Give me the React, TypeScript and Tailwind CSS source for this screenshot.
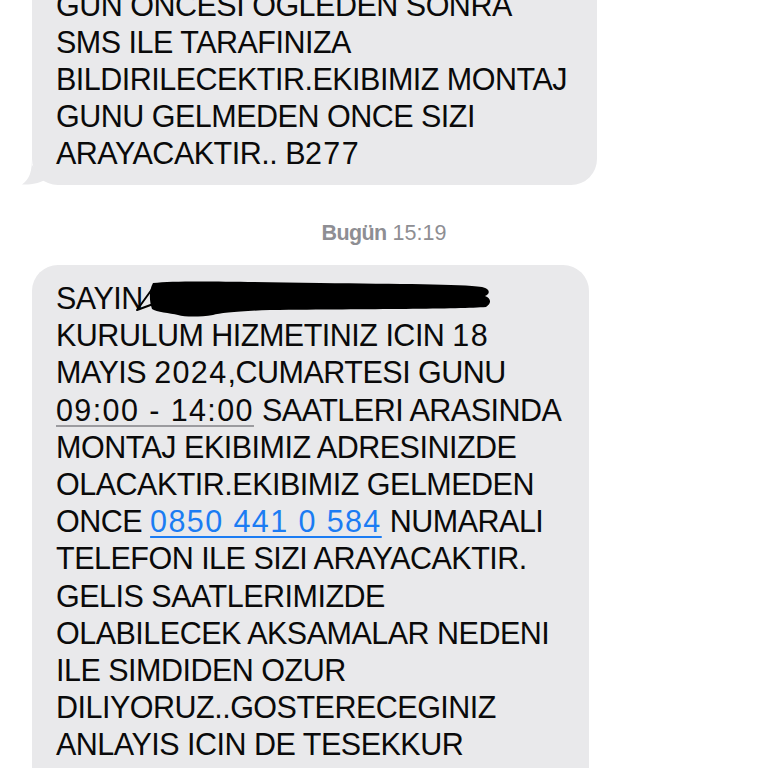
import React from "react";

const Line = ({ children }: { children: React.ReactNode }) => (
  <div className="whitespace-nowrap">{children}</div>
);

const D = ({ children }: { children: React.ReactNode }) => (
  <span className="tracking-[1.4px]">{children}</span>
);

export default function App() {
  return (
    <div className="h-[768px] w-[768px] overflow-hidden bg-white font-['Liberation_Sans',Arial,sans-serif]">
      <div className="flex flex-col">
        {/* First (previous) message bubble */}
        <div className="relative ml-[32px] mt-[-28.5px] w-[565px] rounded-[26px] bg-[#e9e9eb] pb-[12.5px] pl-[24px] pr-[20px] pt-[15px] text-[30.5px] leading-[37.2px] tracking-[-0.5px] text-[#0a0a0a]">
          <Line>GUN ONCESI OGLEDEN SONRA</Line>
          <Line>SMS ILE TARAFINIZA</Line>
          <Line>BILDIRILECEKTIR.EKIBIMIZ MONTAJ</Line>
          <Line>GUNU GELMEDEN ONCE SIZI</Line>
          <Line>
            ARAYACAKTIR.. B<D>277</D>
          </Line>
          <svg
            className="absolute bottom-0 left-[-14px]"
            width="30"
            height="30"
            viewBox="0 0 30 30"
          >
            <path
              d="M14,2 C14,16 12,24 4,29.5 C12,30 22,28.5 28,24 L14,10 Z"
              fill="#e9e9eb"
            />
          </svg>
        </div>

        {/* Timestamp */}
        <div className="mt-[35.3px] text-center text-[21.5px] leading-[26px] text-[#8e8e93]">
          <span className="font-semibold tracking-[-0.6px]">Bugün</span> 15:19
        </div>

        {/* Second message bubble */}
        <div className="relative ml-[32px] mt-[18.7px] w-[557px] rounded-[26px] bg-[#e9e9eb] pb-[16px] pl-[24px] pr-[20px] pt-[15px] text-[30.5px] leading-[37.2px] tracking-[-0.5px] text-[#0a0a0a]">
          <Line>SAYIN</Line>
          <Line>
            KURULUM HIZMETINIZ ICIN <D>18</D>
          </Line>
          <Line>
            MAYIS <D>2024</D>,CUMARTESI GUNU
          </Line>
          <Line>
            <span className="underline decoration-[#9b9b9f] decoration-2 underline-offset-[4px]">
              <D>09:00 - 14:00</D>
            </span>{" "}
            SAATLERI ARASINDA
          </Line>
          <Line>MONTAJ EKIBIMIZ ADRESINIZDE</Line>
          <Line>OLACAKTIR.EKIBIMIZ GELMEDEN</Line>
          <Line>
            ONCE{" "}
            <span className="text-[#1b7cf3] underline decoration-[#1b7cf3] decoration-2 underline-offset-[4px]">
              <D>0850 441 0 584</D>
            </span>{" "}
            NUMARALI
          </Line>
          <Line>TELEFON ILE SIZI ARAYACAKTIR.</Line>
          <Line>GELIS SAATLERIMIZDE</Line>
          <Line>OLABILECEK AKSAMALAR NEDENI</Line>
          <Line>ILE SIMDIDEN OZUR</Line>
          <Line>DILIYORUZ..GOSTERECEGINIZ</Line>
          <Line>ANLAYIS ICIN DE TESEKKUR</Line>
          <Line>
            EDERIZ. B<D>277</D>
          </Line>

          {/* Redaction scribble */}
          <svg
            className="absolute left-[88px] top-[5px]"
            width="380"
            height="60"
            viewBox="0 0 380 60"
          >
            <path
              d="M33,13 C60,10 120,12 200,13 C280,14 340,14 362,17 C371,19 370,24 365,26 C371,28 372,33 366,37 C340,39 250,39 150,40 C120,41 100,43 93,45 C80,47 65,47 58,45 C50,43 36,42 32,39 C29,30 29,20 33,13 Z"
              fill="#000"
            />
            <path
              d="M35,15 L17,40 L36,33"
              fill="none"
              stroke="#000"
              strokeWidth="2"
              strokeLinecap="round"
              strokeLinejoin="round"
            />
          </svg>
        </div>
      </div>
    </div>
  );
}
